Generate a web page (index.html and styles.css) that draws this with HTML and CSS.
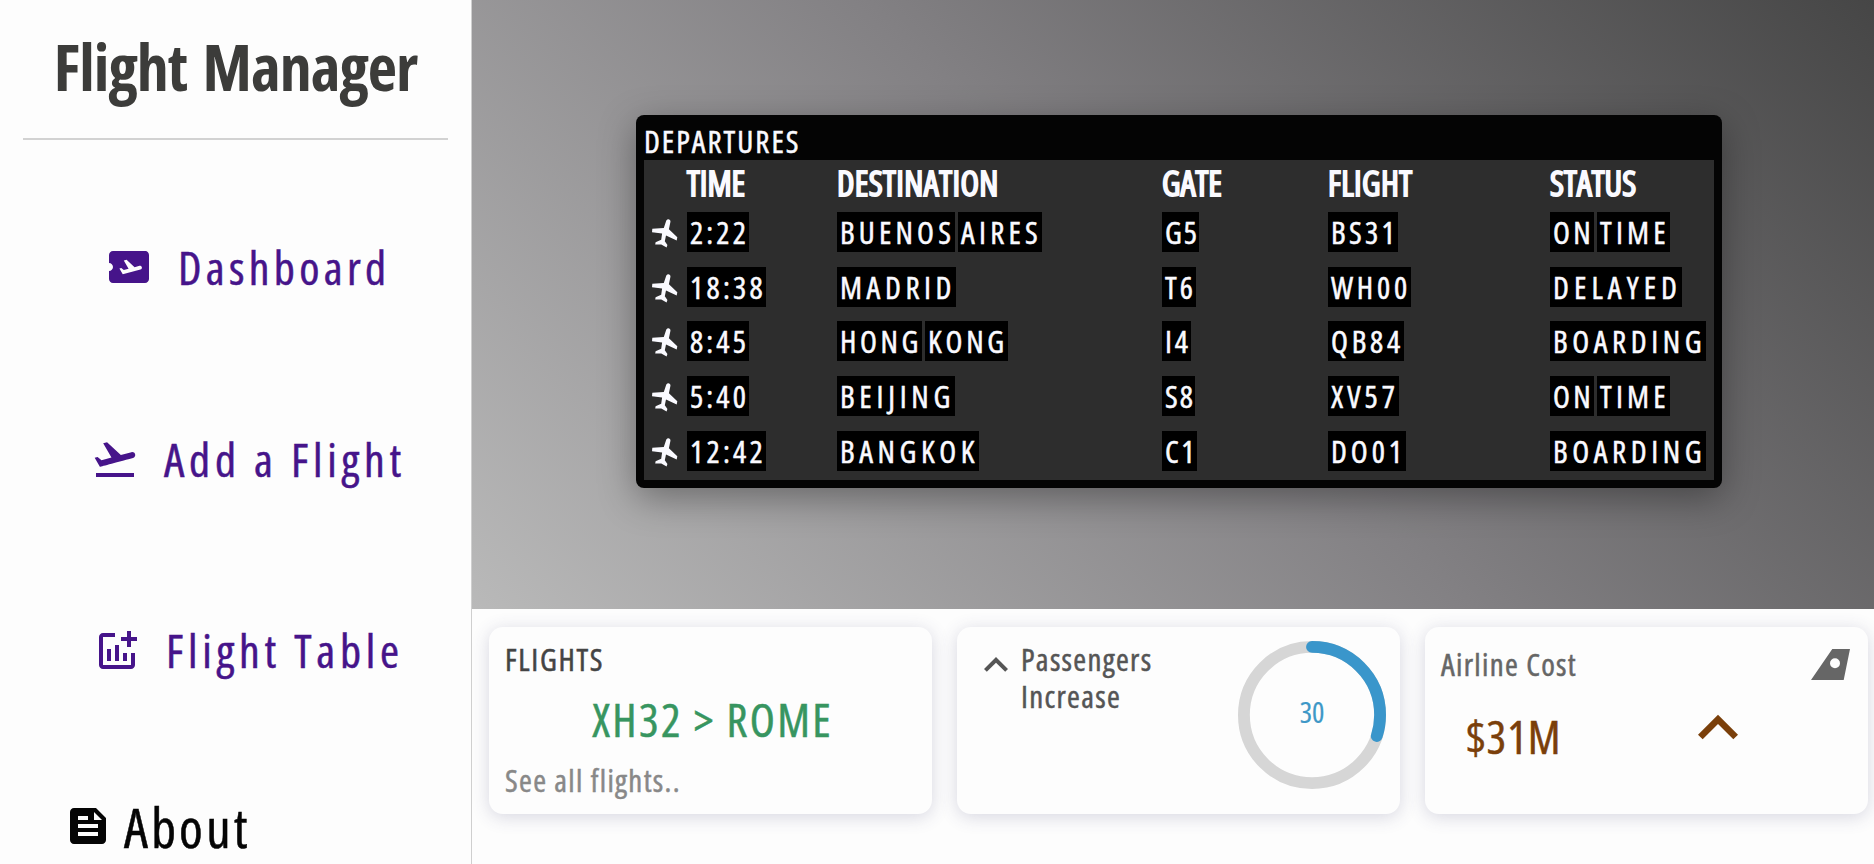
FILE: index.html
```html
<!DOCTYPE html>
<html lang="en">
<head>
<meta charset="utf-8">
<title>Flight Manager</title>
<link rel="stylesheet" href="styles.css">
</head>
<body>
<div class="app">
  <aside class="sidebar">
    <h1 class="brand">Flight Manager</h1>
    <nav class="menu">
      <a class="menu-item dashboard"><svg class="icon" viewBox="0 0 24 24"><path d="M20.19 4H4c-1.1 0-1.99.9-1.99 2v4c1.1 0 1.99.9 1.99 2s-.89 2-2 2v4c0 1.1.9 2 2 2h16c1.1 0 2-.9 2-2V6c0-1.1-.81-2-1.81-2zm-2.46 9.3-8.86 2.36-1.66-2.88.93-.25 1.26.99 2.39-.64-2.4-4.16 1.4-.38 4.01 3.74 2.44-.65c.51-.14 1.04.17 1.18.68.13.51-.17 1.04-.69 1.19z"/></svg><span>Dashboard</span></a>
      <a class="menu-item add"><svg class="icon" viewBox="0 0 24 24"><path d="M2.5 19h19v2h-19v-2zm19.57-9.36c-.21-.8-1.04-1.28-1.84-1.06L14.92 10l-6.9-6.43-1.93.51 4.14 7.17-4.97 1.33-1.97-1.54-1.45.39 2.59 4.49s7.12-1.9 16.57-4.43c.81-.23 1.28-1.05 1.07-1.85z"/></svg><span>Add a Flight</span></a>
      <a class="menu-item table"><svg class="icon" viewBox="0 0 24 24"><path d="M22 5v2h-3v3h-2V7h-3V5h3V2h2v3h3zm-3 14H5V5h6V3H5c-1.1 0-2 .9-2 2v14c0 1.1.9 2 2 2h14c1.1 0 2-.9 2-2v-6h-2v6zm-4-6v4h2v-4h-2zm-4 4h2V9h-2v8zm-2 0v-6H7v6h2z"/></svg><span>Flight Table</span></a>
    </nav>
    <a class="about"><svg class="icon" viewBox="0 0 24 24"><path d="M16 3H5c-1.1 0-2 .9-2 2v14c0 1.1.9 2 2 2h14c1.1 0 2-.9 2-2V8l-5-5zM7 7h5v2H7V7zm10 10H7v-2h10v2zm0-4H7v-2h10v2zm-2-4V5l4 4h-4z"/></svg><span>About</span></a>
  </aside>
  <main class="main">
    <section class="hero">
      <div class="board">
        <div class="board-title">DEPARTURES</div>
        <div class="board-body" id="board">
          <div class="row head"><span></span><span>TIME</span><span class="wide">DESTINATION</span><span>GATE</span><span class="wide">FLIGHT</span><span>STATUS</span></div>
        </div>
      </div>
    </section>
    <section class="cards">
      <article class="card">
        <div class="card-label">FLIGHTS</div>
        <div class="route">XH32 &gt; ROME</div>
        <div class="more">See all flights..</div>
      </article>
      <article class="card passengers">
        <svg class="icon" viewBox="0 0 24 24"><path d="m12 8-6 6 1.41 1.41L12 10.83l4.59 4.58L18 14z"/></svg>
        <div class="p-label">Passengers<br>Increase</div>
        <div class="gauge">
          <svg viewBox="0 0 100 100"><circle class="trail" cx="50" cy="50" r="46"/><circle class="value" cx="50" cy="50" r="46" pathLength="100" transform="rotate(-90 50 50)"/></svg>
          <span class="gauge-text">30</span>
        </div>
      </article>
      <article class="card cost">
        <div class="cost-top"><span>Airline Cost</span>
        <svg class="tail" viewBox="0 0 39 31"><path fill-rule="evenodd" d="M21.3 0H39l-6.3 31H0zM24 9.3a5 5 0 1 0 0 10 5 5 0 0 0 0-10z"/></svg></div>
        <div class="cost-row"><span class="amount">$31M</span>
        <svg class="big-up" viewBox="0 0 24 24"><path d="m12 8-6 6 1.41 1.41L12 10.83l4.59 4.58L18 14z"/></svg></div>
      </article>
    </section>
  </main>
</div>
<script src="board.js"></script>
</body>
</html>
```
FILE: styles.css
```css
* { box-sizing: border-box; }
body {
  margin: 0;
  background: #fdfdfd;
  color: #444;
  font-family: "Open Sans", "Noto Sans", sans-serif;
  font-stretch: condensed;
  -webkit-text-stroke: 0.5px currentColor;
  overflow: hidden;
}
span { white-space: nowrap; }
svg { display: block; fill: currentColor; flex: none; }
.icon { width: 48px; height: 48px; }
.app { display: flex; width: 1874px; height: 864px; }

.sidebar {
  width: 472px;
  height: 864px;
  display: flex;
  flex-direction: column;
  padding: 0 23px;
  border-right: 1px solid #cfcfcf;
}
.brand {
  flex: none;
  margin: 0;
  height: 140px;
  padding-top: 27px;
  line-height: 80px;
  font-size: 64px;
  letter-spacing: -1px;
  word-spacing: 5px;
  white-space: nowrap;
  text-align: center;
  color: #3c3c3a;
  border-bottom: 2px solid #d2d2d2;
  -webkit-text-stroke: 0;
}
.menu {
  flex: none;
  display: flex;
  flex-direction: column;
  align-items: flex-start;
  gap: 132px;
  padding-top: 97px;
}
.menu-item {
  display: flex;
  align-items: center;
  height: 60px;
  gap: 25px;
  font-size: 46px;
  line-height: 60px;
  letter-spacing: 4.75px;
  color: #46148a;
}
.dashboard { margin-left: 82px; letter-spacing: 4.3px; }
.add { margin-left: 68px; }
.table { margin-left: 70px; }
.table span { padding-bottom: 2px; }
.about {
  flex: none;
  display: flex;
  align-items: center;
  margin: 113px 0 0 41px;
  height: 60px;
  gap: 12px;
  font-size: 54px;
  line-height: 60px;
  letter-spacing: 3.25px;
  color: #050505;
}
.about .icon { margin-top: 3px; }
.about span { padding-top: 6px; }

.main { flex: 1; min-width: 0; }
.hero {
  height: 609px;
  display: flex;
  justify-content: center;
  align-items: flex-start;
  padding: 115px 0 0 12px;
  background: linear-gradient(45deg, #b9b9b9, #828083 50%, #464646);
}
.board {
  width: 1086px;
  height: 373px;
  padding: 0 8px 8px;
  border-radius: 8px;
  background: #040404;
  color: #fafaff;
  box-shadow: 0 10px 36px rgba(0, 0, 0, 0.35);
}
.board-title { height: 45px; line-height: 53px; font-size: 31px; letter-spacing: 2px; }
.board-body { height: 320px; background: #2d2d2d; }
.row {
  display: grid;
  grid-template-columns: 43px 150px 325px 166px 222px 1fr;
  align-items: center;
  height: 54.75px;
  font-size: 31px;
}
.head { height: 44.6px; line-height: 46px; font-size: 34px; -webkit-text-stroke: 1.8px; }
.head .wide { letter-spacing: 0.4px; }
.plane { width: 26px; height: 29px; margin: 3px 0 0 8px; }
.cell { display: flex; gap: 3px; }
.word { height: 40px; line-height: 40px; padding-left: 3px; background: #000; }

.cards { display: flex; gap: 25px; padding: 18px 0 0 17px; }
.card {
  width: 443px;
  height: 187px;
  border-radius: 14px;
  background: #fdfdfd;
  box-shadow: 0 3px 18px rgba(60, 60, 110, 0.2);
  padding: 0 16px;
  font-size: 31px;
  letter-spacing: 1.3px;
}
.card-label { padding-top: 12px; line-height: 40px; letter-spacing: 1.64px; }
.route { padding: 14px 0 0 4px; line-height: 52px; font-size: 46px; letter-spacing: 2.35px; text-align: center; color: #379560; }
.more { padding-top: 15px; line-height: 40px; color: #888; }
.passengers { display: flex; padding: 14px 14px 0 15px; color: #555; }
.p-label { padding-left: 1px; line-height: 37px; }
.gauge { margin-left: auto; width: 148px; height: 148px; display: grid; }
.gauge > * { grid-area: 1 / 1; }
.gauge-text { place-self: center; padding-bottom: 7px; font-size: 29px; letter-spacing: 0; color: #3e98c7; -webkit-text-stroke: 0.2px; }
.trail, .value { fill: none; stroke-width: 8; stroke: #d6d6d6; }
.value { stroke: #3a96cb; stroke-linecap: round; stroke-dasharray: 30 100; }
.cost { color: #666; }
.cost-top { display: flex; justify-content: space-between; padding: 22px 2px 0 0; line-height: 30px; }
.tail { width: 39px; height: 31px; }
.cost-row { display: flex; padding: 8px 0 0 25px; color: #7a3f0a; font-size: 46px; letter-spacing: 1px; }
.amount { padding-top: 17px; }
.big-up { width: 80px; height: 80px; margin-left: 117px; }
```
FILE: board.js
```js
const rows = [
  ["2:22", "BUENOS AIRES", "G5", "BS31", "ON TIME"],
  ["18:38", "MADRID", "T6", "WH00", "DELAYED"],
  ["8:45", "HONG KONG", "I4", "QB84", "BOARDING"],
  ["5:40", "BEIJING", "S8", "XV57", "ON TIME"],
  ["12:42", "BANGKOK", "C1", "DO01", "BOARDING"],
];

const plane = '<svg class="plane" viewBox="8 11 26 29"><path d="M22.3 12.6Q23.500 10.800 25.200 11.400Q26.700 12 26.400 14L24.900 21.300L33.300 29.200L32.700 32.600L22 27.600L20.800 33.200L23.400 37L22.600 39.500L17.300 36.600L11.200 36.500L11.600 34.200L17.200 31.700L18.100 25.400L8 24.200L8.300 20.700L19.800 20Z"/></svg>';

const spacing = {
  "2:22": 3.13, "18:38": 3.27, "8:45": 3.13, "5:40": 3.13, "12:42": 3.27,
  BUENOS: 4.15, AIRES: 4.23, MADRID: 4.6, HONG: 3.63, KONG: 3.81, BEIJING: 4.73, BANGKOK: 4.6,
  G5: 2, T6: 3.08, I4: 2.94, S8: 2.04, C1: 2.55,
  BS31: 3.31, WH00: 3.8, QB84: 3.77, XV57: 4.01, DO01: 3.97,
  ON: 3.34, TIME: 4.25, DELAYED: 5.08, BOARDING: 4.59,
};

const word = w => `<span class="word" style="letter-spacing:${spacing[w]}px">${w}</span>`;
const cell = c => `<div class="cell">${c.split(" ").map(word).join("")}</div>`;
const board = document.getElementById("board");
for (const r of rows) {
  board.insertAdjacentHTML("beforeend", `<div class="row">${plane}${r.map(cell).join("")}</div>`);
}
```
